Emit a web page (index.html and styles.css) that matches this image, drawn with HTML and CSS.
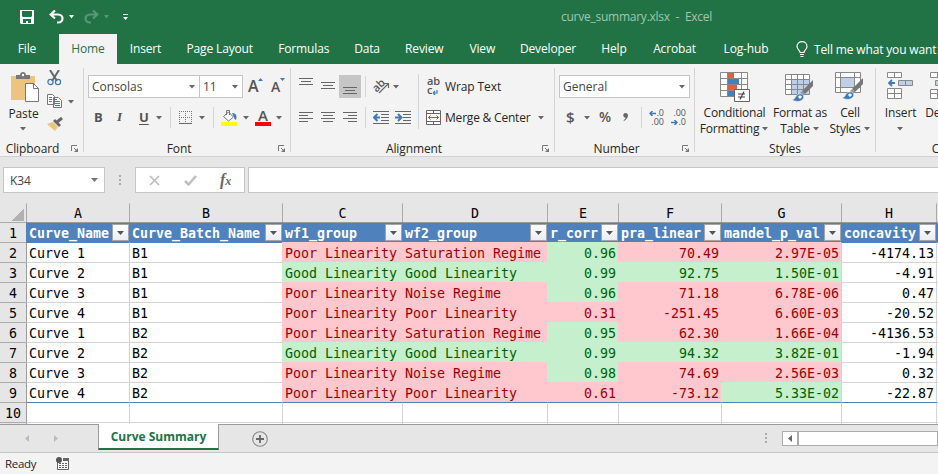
FILE: index.html
```html
<!DOCTYPE html>
<html lang="en">
<head>
<meta charset="utf-8">
<title>curve_summary.xlsx - Excel</title>
<link rel="stylesheet" href="styles.css">
</head>
<body>
<svg class="defs" width="0" height="0">
  <symbol id="arr" viewBox="0 0 7 4"><path d="M0 0h6L3 3.5z" fill="#666"/></symbol>
  <symbol id="launch" viewBox="0 0 8 8"><path d="M.5 6V.5H6M3 3l3 3" fill="none" stroke="#777"/><path d="M7 3v4H3z" fill="#777"/></symbol>
  <symbol id="brush" viewBox="0 0 22 22"><path d="M21 0v6l-8 8-3-3z" fill="#777"/><path d="M10 11l3 3-2 2-3-3z" fill="#999"/><path d="M0 20c4-1 3-5 7-6 4-1 6 3 4 5-2 3-7 3-11 1z" fill="#3f7ab8" stroke="#f3f3f3" stroke-width=".6"/><path d="M6 17c1-2 3-2 4 0l-2 2z" fill="#fff"/></symbol>
</svg>

<header class="titlebar">
  <div class="quick">
    <svg width="14" height="14" viewBox="0 0 14 14"><path d="M0 0h14v14H1l-1-1z" fill="#fff"/><path d="M2 1h10v5l-1 1H3L2 6zM3 9h8v4H8v-2H6v2H3z" fill="#217346"/></svg>
    <svg width="15" height="14" viewBox="0 0 15 14"><path d="M1.500 4.500H9c6 0 6 8 0 8H8M6 .5l-4.300 4L6 8.500" fill="none" stroke="#fff" stroke-width="2.200"/></svg>
    <svg width="6" height="4" viewBox="0 0 6 4"><path d="M0 0h5L2.500 3.500z" fill="#fff"/></svg>
    <svg class="faded" width="15" height="14" viewBox="0 0 15 14"><path d="M13.500 4.500H6c-6 0-6 8 0 8h1M9 .5l4.300 4L9 8.500" fill="none" stroke="#fff" stroke-width="2.200"/></svg>
    <svg class="faded" width="6" height="4" viewBox="0 0 6 4"><path d="M0 0h5L2.500 3.500z" fill="#fff"/></svg>
    <svg width="6" height="7" viewBox="0 0 6 7"><path d="M0 0h5v1H0zM0 3h5L2.500 6z" fill="#fff"/></svg>
  </div>
  <div class="doc">curve_summary.xlsx&nbsp; -&nbsp; Excel</div>
</header>

<nav class="tabs">
  <span>File</span><i></i><span class="on">Home</span><span>Insert</span><span>Page Layout</span><span>Formulas</span><span>Data</span><span>Review</span><span>View</span><span>Developer</span><span>Help</span><span>Acrobat</span><span>Log-hub</span>
  <span class="tell"><svg width="12" height="17" viewBox="0 0 12 17"><path d="M4 11.500C4 9 1 8.500 1 5.500c0-6.500 10-6.500 10 0C11 8.500 8 9 8 11.500zM4 13.500h4M4.500 15.500h3" fill="none" stroke="#fff" stroke-width="1.200"/></svg>Tell me what you want to do</span>
</nav>

<section class="ribbon">
  <div class="group clipboard">
    <div class="tools">
      <div class="paste">
        <svg width="29" height="31" viewBox="0 0 29 31"><path d="M0 4h24v24H0z" fill="#edc47d"/><path d="M5 7V3h4c0-4 6-4 6 0h4v4z" fill="#777"/><circle cx="12" cy="3" r="1.200" fill="#fff"/><path d="M14.500 11.500h8l5 5v13h-13z" fill="#fff" stroke="#777"/><path d="M22.500 11.500v5h5" fill="none" stroke="#777"/></svg>
        <span>Paste</span>
        <svg width="7" height="4"><use href="#arr"/></svg>
      </div>
      <div class="clips">
        <svg width="15" height="16" viewBox="0 0 15 16"><path d="M3 0l7 11M12 0L5 11" stroke="#666" stroke-width="2"/><circle cx="3.500" cy="12" r="2.600" fill="none" stroke="#3f7ab8" stroke-width="1.200"/><circle cx="11" cy="12" r="2.600" fill="none" stroke="#3f7ab8" stroke-width="1.200"/></svg>
        <div class="copy"><svg width="16" height="15" viewBox="0 0 16 15"><path d="M.5.500h5l2 2v8h-7zM6.500 3.500h5l3 3v7h-8z" fill="#fff" stroke="#777"/><path d="M2 3.500h3M2 5.500h3M2 7.500h3M8 7.500h5M8 9.500h5M8 11.500h5M8 5.500h2" stroke="#3f7ab8"/></svg><svg width="7" height="4"><use href="#arr"/></svg></div>
        <svg width="17" height="14" viewBox="0 0 17 14"><path d="M0 7l6-2 5 5-3 4z" fill="#edc47d"/><path d="M6 4l2-2 6 6-2 2z" fill="#666"/><path d="M10 5l5-4" stroke="#666" stroke-width="3"/></svg>
      </div>
    </div>
    <div class="label"><span>Clipboard</span><svg width="8" height="8"><use href="#launch"/></svg></div>
  </div>

  <div class="group font">
    <div class="tools">
      <div class="row combos">
        <div class="combo"><span>Consolas</span><svg width="7" height="4"><use href="#arr"/></svg></div>
        <div class="combo size"><span>11</span><svg width="7" height="4"><use href="#arr"/></svg></div>
        <div class="grow big">A<svg width="5" height="3" viewBox="0 0 5 3"><path d="M0 3h5L2.500 0z" fill="#3f7ab8"/></svg></div>
        <div class="grow">A<svg width="5" height="3" viewBox="0 0 5 3"><path d="M0 0h5L2.500 3z" fill="#3f7ab8"/></svg></div>
      </div>
      <div class="row style">
        <b>B</b><b class="it">I</b><b class="un">U</b><svg width="7" height="4"><use href="#arr"/></svg>
        <i class="sep"></i>
        <svg width="14" height="14" viewBox="0 0 14 14"><path d="M.5 0v12M12.500 0v12M6.500 0v12M0 .5h13M0 6.500h13" stroke="#777" stroke-dasharray="1 1"/><path d="M0 12.500h13" stroke="#666"/></svg>
        <svg width="7" height="4"><use href="#arr"/></svg>
        <i class="sep"></i>
        <svg width="17" height="17" viewBox="0 0 17 17"><path d="M2.500 7.500l5-4.500 5 5-5 4z" fill="#fff" stroke="#777"/><path d="M5.500 6V1.500h3V6" fill="none" stroke="#777"/><path d="M11 4c5 0 5 4 4 7-1-1-2-1-2-3z" fill="#3f7ab8"/><path d="M0 13h16v4H0z" fill="#ff0"/></svg>
        <svg width="7" height="4"><use href="#arr"/></svg>
        <div class="color">A</div>
        <svg width="7" height="4"><use href="#arr"/></svg>
      </div>
    </div>
    <div class="label"><span>Font</span><svg width="8" height="8"><use href="#launch"/></svg></div>
  </div>

  <div class="group align">
    <div class="tools">
      <div class="left">
        <div class="row arow">
          <svg width="14" height="19" viewBox="0 0 14 19"><path d="M0 .5h14M2 3.500h10M0 6.500h14" transform="translate(0 1)" stroke="#666"/></svg>
          <svg width="14" height="19" viewBox="0 0 14 19"><path d="M0 5.500h14M2 8.500h10M0 11.500h14" stroke="#666"/></svg>
          <div class="pressed"><svg width="14" height="19" viewBox="0 0 14 19"><path d="M0 10.500h14M2 13.500h10M0 16.500h14" stroke="#666"/></svg></div>
          <i class="sep"></i>
          <svg width="18" height="17" viewBox="0 0 18 17"><text x="0" y="12" class="abrot" transform="rotate(-45 5 9)">ab</text><path d="M6 15l9-9M11 5.500h4.500V10" fill="none" stroke="#666" stroke-width="1.200"/></svg>
          <svg width="7" height="4"><use href="#arr"/></svg>
        </div>
        <div class="row arow second">
          <svg width="14" height="12" viewBox="0 0 14 12"><path d="M0 .5h14M0 3.500h9M0 6.500h14M0 9.500h9" stroke="#666"/></svg>
          <svg width="14" height="12" viewBox="0 0 14 12"><path d="M0 .5h14M2 3.500h10M0 6.500h14M2 9.500h10" stroke="#666"/></svg>
          <svg class="push" width="14" height="12" viewBox="0 0 14 12"><path d="M0 .5h14M5 3.500h9M0 6.500h14M5 9.500h9" stroke="#666"/></svg>
          <i class="sep"></i>
          <svg width="17" height="14" viewBox="0 0 17 14"><path d="M0 .5h16M8 3.500h8M8 6.500h8M8 9.500h8M0 12.500h16" stroke="#666"/><path d="M7 6.500H2M4.500 3L1 6.500 4.500 10" fill="none" stroke="#3f7ab8" stroke-width="2"/></svg>
          <svg class="indent" width="17" height="14" viewBox="0 0 17 14"><path d="M0 .5h16M8 3.500h8M8 6.500h8M8 9.500h8M0 12.500h16" stroke="#666"/><path d="M0 6.500h5M3 3l3.500 3.500L3 10" fill="none" stroke="#3f7ab8" stroke-width="2"/></svg>
        </div>
      </div>
      <i class="sep tall"></i>
      <div class="right">
        <div class="row wrap"><div class="abc">ab<br>c<svg width="5" height="5" viewBox="0 0 5 5"><path d="M4 0v3H0M2 1L0 3l2 2" fill="none" stroke="#3f7ab8" stroke-width="1.200"/></svg></div><span>Wrap Text</span></div>
        <div class="row merge"><svg width="16" height="16" viewBox="0 0 16 16"><path d="M.5.500h14v14H.5zM0 3.500h15M0 11.500h15M7.500 0v4M7.500 11v4" fill="#fff" stroke="#666"/><path d="M2 7.500h11M4.500 5.500l-2 2 2 2M10.500 5.500l2 2-2 2" fill="none" stroke="#3f7ab8"/></svg><span>Merge &amp; Center</span><svg width="7" height="4"><use href="#arr"/></svg></div>
      </div>
    </div>
    <div class="label"><span>Alignment</span><svg width="8" height="8"><use href="#launch"/></svg></div>
  </div>

  <div class="group number">
    <div class="tools">
      <div class="row"><div class="combo"><span>General</span><svg width="7" height="4"><use href="#arr"/></svg></div></div>
      <div class="row nrow">
        <span>$</span><svg width="7" height="4"><use href="#arr"/></svg><span>%</span><svg width="6" height="9" viewBox="0 0 6 9"><path d="M2.500 0C6 0 6 5.500 1 8L.5 7.300C2 6.500 2.600 5.500 2.600 4.600-.5 4.600-.5 0 2.500 0z" fill="#666"/></svg>
        <i class="sep"></i>
        <div class="dec"><div><svg width="7" height="5" viewBox="0 0 7 5"><path d="M7 2.500H1M3.500 0L1 2.500 3.500 5" fill="none" stroke="#3f7ab8" stroke-width="1.500"/></svg>.0</div><div>.00</div></div>
        <div class="dec"><div>.00</div><div><svg width="7" height="5" viewBox="0 0 7 5"><path d="M0 2.500h6M3.500 0L6 2.500 3.500 5" fill="none" stroke="#3f7ab8" stroke-width="1.500"/></svg>.0</div></div>
      </div>
    </div>
    <div class="label"><span>Number</span><svg width="8" height="8"><use href="#launch"/></svg></div>
  </div>

  <div class="group styles">
    <div class="tools">
      <div class="bigbtn">
        <svg width="30" height="31" viewBox="0 0 30 31"><path d="M.5.500h27v24H.5z" fill="#fff"/><path d="M8 1h6v5H8zM8 13h9v5H8z" fill="#dc6141"/><path d="M8 7h11v5H8zM8 19h6v5H8z" fill="#4580bd"/><path d="M.5.500h27v24H.5zM.5 6.500h27M.5 12.500h27M.5 18.500h27M7.500 0v24M21.500 0v24" fill="none" stroke="#888"/><path d="M14.500 17.500h15v12h-15z" fill="#fff" stroke="#666"/><path d="M18 22h7M18 25h7M24 19.500l-4 8" stroke="#444" stroke-width="1.200"/></svg>
        <span>Conditional</span><span>Formatting <svg width="7" height="4"><use href="#arr"/></svg></span>
      </div>
      <div class="bigbtn">
        <svg width="30" height="31" viewBox="0 0 30 31"><path d="M.5 2.500h24v20H.5z" fill="#fff"/><path d="M7 8h17v14H7z" fill="#bdd0e7"/><path d="M.5 2.500h24v20H.5zM.5 7.500h24M.5 12.500h24M.5 17.500h24M6.500 2v20M12.500 2v20M18.500 2v20" fill="none" stroke="#888"/><use href="#brush" x="7" y="8" width="22" height="22"/></svg>
        <span>Format as</span><span>Table <svg width="7" height="4"><use href="#arr"/></svg></span>
      </div>
      <div class="bigbtn">
        <svg width="30" height="31" viewBox="0 0 30 31"><path d="M.5.500h25v20H.5z" fill="#fff"/><path d="M.5.500h25v20H.5zM.5 5.500h25M.5 15.500h25M5.500 0v20M19.500 0v20" fill="none" stroke="#888"/><path d="M6 6h13v9H6z" fill="#bdd0e7"/><use href="#brush" x="7" y="6" width="22" height="22"/></svg>
        <span>Cell</span><span>Styles <svg width="7" height="4"><use href="#arr"/></svg></span>
      </div>
    </div>
    <div class="label"><span>Styles</span></div>
  </div>

  <div class="group cells">
    <div class="tools">
      <div class="bigbtn">
        <svg width="27" height="31" viewBox="0 0 27 31"><path d="M.5.500h14v5H.5zM7.500.5v5M.5 16.500h14v10H.5zM7.500 16.500v10M.5 21.500h14" fill="#fff" stroke="#888"/><path d="M11.500 8.500h14v5h-14zM18.500 8.500v5" fill="#bdd0e7" stroke="#888"/><path d="M8 11H2M5 8l-3 3 3 3" fill="none" stroke="#3f7ab8" stroke-width="1.800"/></svg>
        <span>Insert</span><span><svg width="7" height="4"><use href="#arr"/></svg></span>
      </div>
      <div class="bigbtn del">
        <svg width="27" height="31" viewBox="0 0 27 31"><path d="M.5.500h14v5H.5zM7.500.5v5M.5 17.500h14v9H.5zM7.500 17.500v9M.5 21.500h14" fill="#fff" stroke="#888"/><path d="M5.500 8.500h14v5h-14z" fill="#bdd0e7" stroke="#888"/></svg>
        <span>Delete</span>
      </div>
    </div>
    <div class="label"><span>Cells</span></div>
  </div>
</section>

<section class="formula">
  <div class="name"><span>K34</span><svg width="7" height="4" viewBox="0 0 7 4"><path d="M0 0h7L3.500 4z" fill="#777"/></svg></div>
  <i class="dots"></i>
  <div class="fx">
    <svg width="11" height="11" viewBox="0 0 11 11"><path d="M1 1l9 9M10 1l-9 9" stroke="#bfbfbf" stroke-width="1.700"/></svg>
    <svg width="13" height="11" viewBox="0 0 13 11"><path d="M1 6l3.500 3.500L12 1" fill="none" stroke="#bfbfbf" stroke-width="2.500"/></svg>
    <em>f<small>x</small></em>
  </div>
  <div class="input"></div>
</section>

<main class="sheet" id="sheet"></main>

<footer class="sheetbar">
  <svg width="5" height="8" viewBox="0 0 5 8"><path d="M4 0v7L0 3.500z" fill="#bbb"/></svg>
  <svg width="5" height="8" viewBox="0 0 5 8"><path d="M0 0v7l4-3.500z" fill="#bbb"/></svg>
  <div class="tab">Curve Summary</div>
  <svg class="add" width="16" height="16" viewBox="0 0 16 16"><circle cx="8" cy="8" r="7.300" fill="none" stroke="#888" stroke-width="1.100"/><path d="M8 4v8M4 8h8" stroke="#666" stroke-width="1.800"/></svg>
  <i class="dots"></i>
  <div class="scroll"><svg width="14" height="13" viewBox="0 0 14 13"><path d="M9 3v7L5 6.500z" fill="#666"/></svg><i></i></div>
</footer>
<div class="status"><span>Ready</span>
  <svg width="14" height="14" viewBox="0 0 14 14"><path d="M1.500 5v7.500h11v-11H8" fill="#fff" stroke="#666"/><path d="M7 1h6v3H7z" fill="#666"/><path d="M3 6.500h9M3 8.500h9M3 10.500h9" stroke="#666" stroke-dasharray="2 1"/><circle cx="3" cy="3" r="3" fill="#555"/></svg>
</div>
<script>
const sheet = document.getElementById('sheet');
const heads = ['Curve_Name', 'Curve_Batch_Name', 'wf1_group', 'wf2_group', 'r_corr', 'pra_linear', 'mandel_p_val', 'concavity'];
// Each row: values, then one flag per column C..G (b = bad, g = good)
const rows = [
  ['Curve 1', 'B1', 'Poor Linearity', 'Saturation Regime', '0.96', '70.49', '2.97E-05', '-4174.13', 'bbgbb'],
  ['Curve 2', 'B1', 'Good Linearity', 'Good Linearity', '0.99', '92.75', '1.50E-01', '-4.91', 'ggggg'],
  ['Curve 3', 'B1', 'Poor Linearity', 'Noise Regime', '0.96', '71.18', '6.78E-06', '0.47', 'bbgbb'],
  ['Curve 4', 'B1', 'Poor Linearity', 'Poor Linearity', '0.31', '-251.45', '6.60E-03', '-20.52', 'bbbbb'],
  ['Curve 1', 'B2', 'Poor Linearity', 'Saturation Regime', '0.95', '62.30', '1.66E-04', '-4136.53', 'bbgbb'],
  ['Curve 2', 'B2', 'Good Linearity', 'Good Linearity', '0.99', '94.32', '3.82E-01', '-1.94', 'ggggg'],
  ['Curve 3', 'B2', 'Poor Linearity', 'Noise Regime', '0.98', '74.69', '2.56E-03', '0.32', 'bbgbb'],
  ['Curve 4', 'B2', 'Poor Linearity', 'Poor Linearity', '0.61', '-73.12', '5.33E-02', '-22.87', 'bbbbg']
];
const arrow = '<span class="filter"><svg width="7" height="4" viewBox="0 0 7 4"><path d="M0 0h7L3.500 4z" fill="#555"/></svg></span>';
let html = '';
const add = (cls, text = '') => { html += `<div class="${cls}">${text}</div>`; };

add('corner');
for (const c of 'ABCDEFGH') add('ch', c);
add('ch');
add('rh', '1');
heads.forEach((h, i) => add('th c' + i, `<span>${h}</span>${arrow}`));
add('th');
rows.forEach((r, n) => {
  add('rh', n + 2);
  for (let i = 0; i < 8; i++) {
    const flag = i > 1 && i < 7 ? (r[8][i - 2] === 'b' ? ' bad' : ' good') : '';
    add('c' + i + flag + (i > 3 ? ' num' : '') + (n === 0 && !flag ? ' edge' : ''), r[i]);
  }
  add(n === 0 ? 'edge' : '');
});
add('rh', '10');
for (let i = 0; i < 9; i++) add('edge c' + i);
add('rh');
for (let i = 0; i < 9; i++) add('c' + i);
sheet.innerHTML = html;
</script>
</body>
</html>
```
FILE: styles.css
```css
* { box-sizing: border-box; }
body { margin: 0; width: 938px; height: 474px; overflow: hidden; background: #e6e6e6; font: 12px "Open Sans", "Noto Sans", sans-serif; color: #262626; letter-spacing: -.1px; }
svg { display: block; flex: none; }
i { font-style: normal; }
.defs { display: none; }

.titlebar { height: 34px; background: #217346; display: flex; }
.quick { width: 561px; display: grid; grid-template-columns: 29px 20px 15px 20px 19px 6px; padding-left: 20px; align-items: center; }
.faded { opacity: .25; }
.doc { color: #a0c6b0; line-height: 34px; white-space: nowrap; letter-spacing: -.25px; }

.tabs { height: 30px; background: #217346; color: #fff; display: grid; grid-template-columns: 54px 5px 58px 57px 91.5px 76.5px 50px 64.5px 51.5px 80px 52px 69px 74px 155px; text-align: center; line-height: 29px; white-space: nowrap; overflow: hidden; letter-spacing: -.15px; }
.tabs .on { background: #f3f3f3; color: #217346; }
.tabs .tell { display: flex; gap: 6px; align-items: center; padding-left: 13px; letter-spacing: -.15px; }

.ribbon { height: 93px; padding-top: 4px; background: #f3f3f3; border-bottom: 1px solid #d2d2d2; display: flex; overflow: hidden; }
.group { height: 84px; border-right: 1px solid #d4d4d4; flex: none; }
.tools { height: 74px; }
.label { height: 12px; line-height: 14px; display: flex; justify-content: center; position: relative; }
.label svg { position: absolute; right: 4px; top: 3px; }
.row { height: 23px; display: flex; align-items: center; }
.row + .row { margin-top: 8px; }
.sep { width: 1px; height: 21px; background: #d4d4d4; }
.clipboard { width: 84px; }
.clipboard .tools { display: flex; }
.clipboard .label { padding-right: 18px; }
.paste { width: 47px; display: flex; flex-direction: column; align-items: center; padding-top: 4px; }
.paste > svg:first-child { margin-left: 3px; }
.paste span { line-height: 21px; margin-bottom: 3px; }
.clips { display: flex; flex-direction: column; padding-top: 2px; gap: 8px; }
.copy { display: flex; align-items: center; gap: 5px; }
.font { width: 207px; }
.font .tools, .number .tools { padding: 7px 4px 0; }
.font .label { padding-right: 16px; }
.combo { flex: none; width: 112px; height: 23px; border: 1px solid #c6c6c6; background: #fff; display: flex; align-items: center; justify-content: space-between; padding: 0 3px 0 3px; color: #444; letter-spacing: 0; }
.combo.size { width: 44px; margin-left: -1px; }
.grow { display: flex; flex: none; width: 18px; height: 20px; font-size: 14px; font-weight: 600; line-height: 20px; color: #555; margin-left: 5px; }
.grow.big { font-size: 16px; line-height: 19px; }
.grow svg { margin-top: 1px; }
.style { display: grid; grid-template-columns: 23px 22px 17px 14px 9px 20px 14px 8px 22px 12px 21px 8px; padding-left: 6px; color: #555; }
.style b { font-size: 13px; line-height: 18px; margin-top: -2px; }
.it { font-family: "Liberation Serif", serif; font-style: italic; }
.un { text-decoration: underline; text-underline-offset: 2px; }
.color { width: 16px; height: 17px; border-bottom: 4px solid red; font-weight: 600; font-size: 15px; line-height: 12px; text-align: center; }
.align { width: 264px; }
.align .tools { display: flex; padding: 7px 0 0; }
.align .label { padding-right: 17px; }
.left { width: 127px; }
.arow { display: grid; grid-template-columns: 22px 18px 26px 8px 20px 10px; padding-left: 8px; }
.pressed { width: 22px; height: 23px; background: #c6c6c6; padding: 2px 4px; }
.push { margin-left: 4px; }
.indent { margin-left: 2px; }
.abrot { font: 600 11px "Open Sans", sans-serif; fill: #555; }
.tall { height: 55px; margin-top: -1px; }
.right { padding-left: 7px; }
.abc { width: 19px; font-size: 11px; font-weight: 600; line-height: 9px; margin-top: -2px; color: #555; padding-left: 1px; }
.abc svg { display: inline-block; margin-left: 1px; vertical-align: -1px; }
.merge span { margin: 0 8px 0 3px; letter-spacing: -.2px; }
.number { width: 140px; }
.number .combo { width: 131px; }
.number .label { padding-right: 16px; }
.nrow { display: grid; grid-template-columns: 18px 15px 24px 18px 8px 22px 16px; padding-left: 7px; font-size: 15px; color: #555; }
.nrow > span { font-weight: 600; line-height: 20px; margin-top: -2px; }
.nrow > span:nth-child(3) { font-size: 14px; }
.dec { font-size: 9px; line-height: 9px; width: 15px; letter-spacing: 0; text-align: right; margin-top: -2px; }
.dec svg { display: inline-block; }
.dec div { white-space: nowrap; }
.styles { width: 181px; }
.styles .tools { display: grid; grid-template-columns: 79px 52px 48px; letter-spacing: -.2px; }
.bigbtn { display: flex; flex-direction: column; align-items: center; padding-top: 4px; line-height: 16px; white-space: nowrap; }
.bigbtn svg + span { margin-top: 2px; }
.bigbtn span svg { display: inline-block; vertical-align: 2px; }
.cells { width: 140px; border: 0; }
.cells .tools { display: flex; }
.cells .bigbtn { width: 49px; }
.cells .del { width: 36px; }
.cells .label { padding-right: 3px; }

.formula { height: 46px; display: flex; padding: 10px 0 10px 3px; }
.name { width: 102px; border: 1px solid #c6c6c6; background: #fff; display: flex; justify-content: space-between; align-items: center; padding: 0 6px; color: #444; }
.dots { width: 2px; height: 11px; background: repeating-linear-gradient(#aaa 0 2px, transparent 2px 4px); align-self: center; }
.formula .dots { margin: 0 14px; }
.fx { width: 110px; border: 1px solid #c6c6c6; background: #fff; display: grid; grid-template-columns: 35px 36px 20px; padding-left: 13px; align-items: center; }
.fx em { font: italic bold 16px "Liberation Serif", serif; color: #666; }
.fx small { font-size: 12px; }
.input { flex: 1; margin-left: 3px; border: 1px solid #c6c6c6; border-right: 0; background: #fff; }

.sheet { height: 221px; overflow: hidden; display: grid; grid-template-columns: 26px 103px 153px 120px 145px 71px 103px 120px 95px 2px; grid-template-rows: 19px; grid-auto-rows: 20px; font: 13.300px "DejaVu Sans Mono", monospace; letter-spacing: 0; color: #000; background: #fff; }
.sheet > div { border-left: 1px solid #d4d4d4; border-top: 1px solid #d4d4d4; padding: 0 0 0 2px; line-height: 22px; height: 20px; white-space: pre; min-width: 0; }
.sheet > .ch { height: 19px; padding: 0; background: #e6e6e6; border-color: #e6e6e6; border-left-color: #aaa; text-align: center; line-height: 19px; }
.sheet > .corner { height: 19px; background: linear-gradient(135deg, #e6e6e6 50%, #b1b1b1 50%) 11px 5px / 12px 12px no-repeat #e6e6e6; border-color: #e6e6e6; }
.sheet > .rh { padding: 0 1px; background: #e6e6e6; border-left: 0; border-top-color: #ababab; text-align: center; }
.sheet > .c0 { border-left-color: #9b9b9b; }
.sheet > .th { background: #4f81bd; border-color: #9b9b9b #4f81bd #4f81bd; color: #fff; font-weight: bold; display: flex; justify-content: space-between; }
.sheet > .edge { border-top-color: #4f81bd; }
.sheet > .bad { background: #ffc7ce; color: #9c0006; border-color: #ffc7ce; }
.sheet > .good { background: #c6efce; color: #006100; border-color: #c6efce; }
.sheet > .num { text-align: right; padding-right: 2px; }
.filter { flex: none; width: 17px; height: 17px; margin: 1px 0; border: 1px solid #a5a5a5; background: linear-gradient(#fff, #e9ecf2); display: grid; place-items: center; }

.sheetbar { height: 29px; border-top: 1px solid #9b9b9b; border-bottom: 1px solid #c6c6c6; display: flex; align-items: center; }
.sheetbar > svg:first-child { margin: 0 24px 0 25px; }
.tab { width: 121px; height: 26px; margin: -4px 0 0 39px; background: #fff; border: 1px solid #9b9b9b; border-width: 0 1px 2px; border-bottom-color: #217346; color: #217346; font-weight: 700; text-align: center; line-height: 26px; letter-spacing: 0; }
.add { margin-left: 33px; }
.sheetbar .dots { margin-left: 497px; }
.scroll { margin-left: 15px; width: 156px; height: 15px; border: 1px solid #ababab; background: #fff; display: flex; }
.scroll i { width: 2px; background: #ababab; }
.status { height: 21px; background: #f3f3f3; display: flex; align-items: center; gap: 20px; padding-left: 5px; font-size: 11.500px; letter-spacing: -.3px; }
```
